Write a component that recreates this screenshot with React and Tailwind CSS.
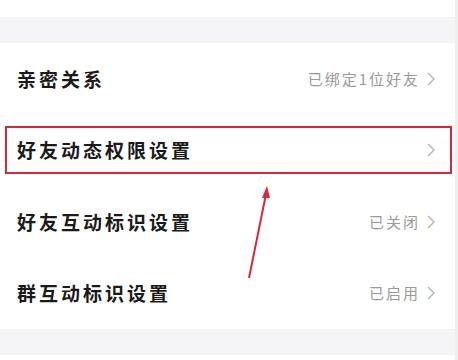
import React from "react";

const Chevron = () => (
  <svg width="10" height="16" viewBox="0 0 10 16" className="ml-[6px]">
    <polyline points="2,2 8,8 2,14" fill="none" stroke="#b5b5b5" strokeWidth="1.4" />
  </svg>
);

const Row = ({ title, value, boxed }) => (
  <div className="h-[72px] flex items-center pl-[5px] pr-[3px]">
    <div
      className={
        "flex-1 h-[48px] flex items-center justify-between pl-[10px] pr-[14px] " +
        (boxed ? "border-2 border-[#d8283c]" : "border-2 border-transparent")
      }
    >
      <span className="text-[19px] font-bold tracking-[3px] text-[#1a1a1a]">{title}</span>
      <span className="flex items-center text-[15px] tracking-[2px] text-[#9a9a9a]">
        {value}
        <Chevron />
      </span>
    </div>
  </div>
);

export default function App() {
  return (
    <div
      className="relative w-[458px] h-[360px] bg-white flex overflow-hidden"
      style={{ fontFamily: '"Noto Sans CJK SC", "Noto Sans", sans-serif' }}
    >
      <div className="flex-1 flex flex-col">
        <div className="h-[17px] bg-white" />
        <div className="h-[26px] bg-[#f5f5f7]" />
        <div className="h-[286px] bg-white flex flex-col">
          <Row title="亲密关系" value="已绑定1位好友" />
          <Row title="好友动态权限设置" value="" boxed />
          <Row title="好友互动标识设置" value="已关闭" />
          <Row title="群互动标识设置" value="已启用" />
        </div>
        <div className="h-[26px] bg-[#f5f5f7]" />
        <div className="flex-1 bg-white" />
      </div>
      <div className="w-[3px] bg-[#efefef]" />
      <svg className="absolute left-0 top-0" width="458" height="360">
        <line x1="249" y1="278" x2="266" y2="194" stroke="#d8283c" strokeWidth="2" />
        <polygon points="267,186 262,198 270,198" fill="#d8283c" />
      </svg>
    </div>
  );
}
